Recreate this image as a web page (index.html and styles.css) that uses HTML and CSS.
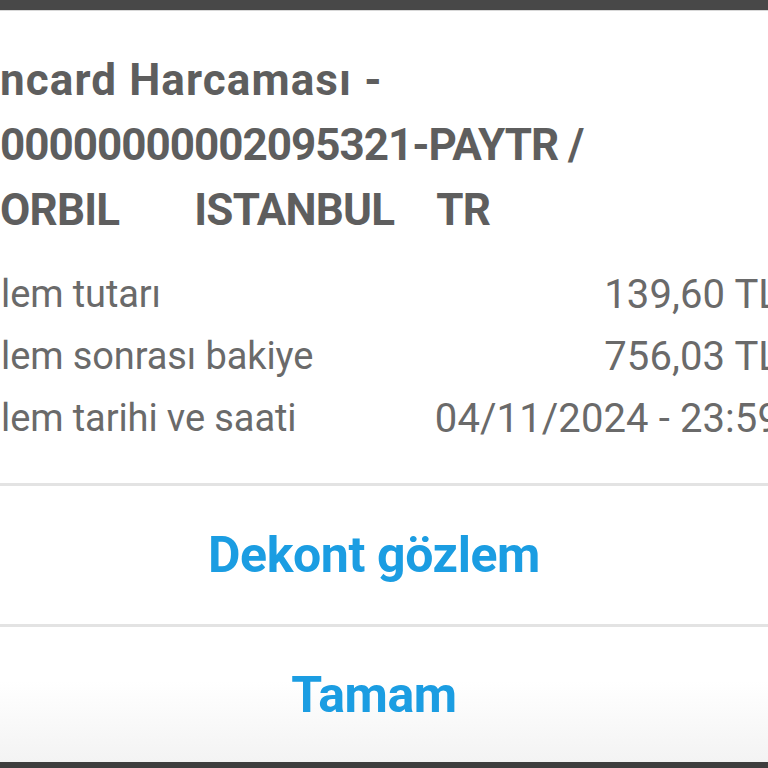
FILE: index.html
```html
<!DOCTYPE html>
<html lang="tr">
<head>
<meta charset="utf-8">
<title>Dekont</title>
<link rel="stylesheet" href="styles.css">
</head>
<body>
<div class="topbar"></div>
<main class="dialog">
  <section class="content">
    <h1 class="title">
      <span class="title-line first">ncard Harcaması -</span>
      <span class="title-line second">00000000002095321-PAYTR /</span>
      <span class="title-line loc"><span>ORBIL</span><span class="city">ISTANBUL</span><span class="country">TR</span></span>
    </h1>
    <div class="details">
      <div class="row"><span class="label">lem tutarı</span><span class="value">139,60 TL</span></div>
      <div class="row"><span class="label">lem sonrası bakiye</span><span class="value">756,03 TL</span></div>
      <div class="row"><span class="label">lem tarihi ve saati</span><span class="value">04/11/2024 - 23:59</span></div>
    </div>
  </section>
  <button class="action">Dekont gözlem</button>
  <button class="action last">Tamam</button>
</main>
<div class="bottombar"></div>
</body>
</html>
```
FILE: styles.css
```css
html, body {
  margin: 0;
  padding: 0;
  height: 768px;
  overflow: hidden;
  background: #ffffff;
}
body {
  display: flex;
  flex-direction: column;
  font-family: Roboto, "Noto Sans", sans-serif;
}
.topbar {
  height: 10px;
  background: #484848;
  border-bottom: 1px solid #d8d8d8;
  flex: none;
}
.dialog {
  flex: 1;
  display: flex;
  flex-direction: column;
  width: 790px;
}
.content {
  padding: 37px 0 34px 0;
}
.title {
  margin: 0;
  display: flex;
  flex-direction: column;
  font-size: 44px;
  font-weight: 700;
  line-height: 65px;
  color: #5e5e5e;
  letter-spacing: -0.8px;
}
.title-line {
  display: block;
  white-space: nowrap;
}
.title-line.first {
  letter-spacing: 1.1px;
}
.title-line.second {
  letter-spacing: -1px;
}
.loc {
  display: flex;
}
.city { margin-left: 75px; }
.country { margin-left: 42px; }
.details {
  margin-top: 20px;
  display: flex;
  flex-direction: column;
}
.row {
  display: flex;
  justify-content: space-between;
  align-items: center;
  height: 62px;
  color: #6a6a6a;
  white-space: nowrap;
}
.label {
  padding-left: 1px;
  font-size: 38px;
  letter-spacing: -0.1px;
}
.value {
  padding-right: 10px;
  font-size: 40px;
  letter-spacing: 0.1px;
}
.action {
  flex: none;
  height: 141px;
  border: none;
  border-top: 3px solid #e3e3e3;
  background: #ffffff;
  color: #1b9de2;
  font-family: Roboto, "Noto Sans", sans-serif;
  font-size: 50px;
  font-weight: 700;
  letter-spacing: -0.4px;
  width: 768px;
  padding: 0 20px 0 0;
}
.action.last {
  flex: 1;
  height: auto;
  background: linear-gradient(#ffffff 40%, #f3f3f3);
}
.bottombar {
  height: 6px;
  background: #3e3e3e;
  flex: none;
}
```
